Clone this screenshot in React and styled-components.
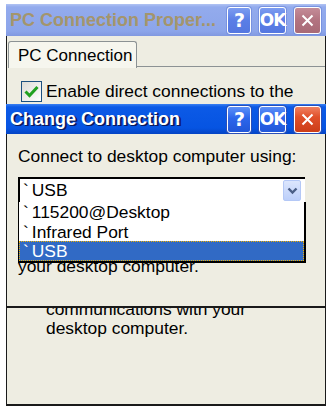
import styled, { createGlobalStyle } from 'styled-components';

const GlobalStyle = createGlobalStyle`
  html, body {
    margin: 0;
    background: #ffffff;
  }
  body {
    font-family: "Liberation Sans", Arial, sans-serif;
    font-size: 17.4px;
    color: #000000;
  }
`;

const Screen = styled.div`
  width: 331px;
  height: 414px;
  padding: 4px 5px 0 6px;
  box-sizing: border-box;
`;

const Window = styled.div`
  position: relative;
  width: 320px;
  height: 402px;
  box-sizing: border-box;
  background: #eeede2;
  border-left: 1px solid #1a1a1a;
  border-right: 1px solid #1a1a1a;
  border-bottom: 2px solid #1a1a1a;
  display: flex;
  flex-direction: column;
`;

const TitleBar = styled.div`
  height: ${(p) => p.$height}px;
  margin: 0 -1px;
  flex: none;
  display: flex;
  align-items: center;
  padding: 0 5px 0 4px;
  box-sizing: border-box;
  background: ${(p) =>
    p.$active
      ? 'linear-gradient(#3a80f2 0, #0c5ae6 3px, #0654e2 80%, #0444c4 100%)'
      : 'linear-gradient(#b1c3f3 0, #93abed 3px, #8ca5ea 85%, #8199e0 100%)'};
`;

const Title = styled.div`
  flex: 1;
  font-size: 18px;
  font-weight: bold;
  white-space: nowrap;
  overflow: hidden;
  color: ${(p) => (p.$active ? '#ffffff' : '#a4956c')};
  text-shadow: ${(p) => (p.$active ? '1px 1px 0 #0a1a60, 2px 1px 0 #0a1a60' : 'none')};
`;

const Buttons = styled.div`
  display: flex;
  gap: 8px;
`;

const CapButton = styled.div`
  width: ${(p) => p.$width}px;
  height: 27px;
  box-sizing: border-box;
  border: 1px solid #ffffff;
  border-radius: 3px;
  display: flex;
  align-items: center;
  justify-content: center;
  font-family: "DejaVu Sans", sans-serif;
  font-weight: bold;
  font-size: ${(p) => (p.$small ? 17 : 19)}px;
  letter-spacing: -1px;
  color: #ffffff;
  background: ${(p) =>
    p.$red
      ? p.$active
        ? 'linear-gradient(#f08060, #e0502a 40%, #cc3d18)'
        : 'linear-gradient(#c48c98, #b27380 50%, #a86a76)'
      : p.$active
      ? 'linear-gradient(#5c90f8, #2c66ec 45%, #2157d8)'
      : 'linear-gradient(#7c9cf0, #5a7ee6 50%, #5477e0)'};
  box-shadow: ${(p) => (p.$active ? '0 0 0 1px #2a4fb8' : '0 0 0 1px #7892e0')};
`;

function Caption({ active, text, height }) {
  return (
    <TitleBar $active={active} $height={height}>
      <Title $active={active}>{text}</Title>
      <Buttons>
        <CapButton $active={active} $width={24}>?</CapButton>
        <CapButton $active={active} $width={27} $small>
          OK
        </CapButton>
        <CapButton $active={active} $width={27} $red>
          <svg width="15" height="15" viewBox="0 0 15 15">
            <path d="M2.5 2.5 L12.5 12.5 M12.5 2.5 L2.5 12.5" stroke="#ffffff" strokeWidth="2" />
          </svg>
        </CapButton>
      </Buttons>
    </TitleBar>
  );
}

const TabStrip = styled.div`
  display: flex;
  align-items: flex-end;
  padding: 5px 0 0 1px;
  height: 32px;
  box-sizing: border-box;
  flex: none;
`;

const Tab = styled.div`
  width: 129px;
  height: 27px;
  box-sizing: border-box;
  border: 1px solid #8c9294;
  border-bottom: none;
  border-radius: 3px 3px 0 0;
  background: #f6f6ee;
  font-size: 17px;
  padding: 4px 0 0 9px;
  white-space: nowrap;
`;

const TabRest = styled.div`
  flex: 1;
  border-bottom: 1px solid #8c9294;
  margin-bottom: 1px;
`;

const Content = styled.div`
  padding: 13px 0 0 14px;
`;

const CheckRow = styled.div`
  display: flex;
  align-items: center;
  gap: 4px;
  height: 21px;
  white-space: nowrap;
`;

const CheckBox = styled.div`
  width: 21px;
  height: 21px;
  box-sizing: border-box;
  border: 1px solid #1c5180;
  background: linear-gradient(135deg, #dcdcd6, #ffffff);
  display: flex;
  align-items: center;
  justify-content: center;
`;

const Hint = styled.div`
  margin: 198px 0 0 25px;
  line-height: 19px;
`;

const Line = styled.div`
  height: 19px;
  white-space: nowrap;
`;

const Dialog = styled.div`
  position: absolute;
  top: 100px;
  left: -1px;
  width: 320px;
  height: 204px;
  box-sizing: border-box;
  background: #eeede2;
  border-left: 1px solid #1a1a1a;
  border-right: 1px solid #1a1a1a;
  border-bottom: 2px solid #1a1a1a;
  display: flex;
  flex-direction: column;
`;

const DialogBody = styled.div`
  padding: 13px 0 0 11px;
  line-height: 19px;
`;

const Combo = styled.div`
  position: relative;
  margin-top: 11px;
  width: 287px;
  height: 25px;
  box-sizing: border-box;
  background: #ffffff;
  border-top: 2px solid #000000;
  border-left: 2px solid #000000;
  display: flex;
  align-items: center;
  padding-left: 3px;
`;

const ComboText = styled.div`
  flex: 1;
  white-space: nowrap;
`;

const Tick = styled.span`
  margin-right: 3px;
`;

const DropButton = styled.div`
  width: 18px;
  height: 21px;
  margin-right: 4px;
  box-sizing: border-box;
  border: 1px solid #b4c8f6;
  border-radius: 2px;
  background: linear-gradient(#dce6fd, #bccffa);
  display: flex;
  align-items: center;
  justify-content: center;
`;

const List = styled.div`
  position: absolute;
  top: 23px;
  left: -2px;
  width: 288px;
  box-sizing: border-box;
  background: #ffffff;
  border-left: 1px solid #000000;
  border-right: 2px solid #000000;
  border-bottom: 2px solid #000000;
  z-index: 2;
`;

const Item = styled.div`
  height: 19.5px;
  line-height: 19px;
  padding-left: 3px;
  white-space: nowrap;
  box-sizing: border-box;
  color: ${(p) => (p.$selected ? '#ffffff' : '#000000')};
  background: ${(p) => (p.$selected ? '#316ac5' : 'transparent')};
  border: 1px ${(p) => (p.$selected ? 'dotted #f0b000' : 'solid transparent')};
`;

const Note = styled.div`
  margin-top: 55px;
`;

function Entry({ label }) {
  return (
    <>
      <Tick>`</Tick>
      {label}
    </>
  );
}

export default function App() {
  return (
    <>
      <GlobalStyle />
      <Screen>
        <Window>
          <Caption text="PC Connection Proper..." height={32} />
          <TabStrip>
            <Tab>PC Connection</Tab>
            <TabRest />
          </TabStrip>
          <Content>
            <CheckRow>
              <CheckBox>
                <svg width="15" height="13" viewBox="0 0 15 13">
                  <path d="M1.5 6.5 L5.5 10.5 L13.5 2" fill="none" stroke="#21a121" strokeWidth="3" />
                </svg>
              </CheckBox>
              Enable direct connections to the
            </CheckRow>
            <Hint>
              <Line>communications with your</Line>
              <Line>desktop computer.</Line>
            </Hint>
          </Content>
          <Dialog>
            <Caption active text="Change Connection" height={30} />
            <DialogBody>
              <div>Connect to desktop computer using:</div>
              <Combo>
                <ComboText>
                  <Entry label="USB" />
                </ComboText>
                <DropButton>
                  <svg width="11" height="8" viewBox="0 0 11 8">
                    <path d="M1.5 1.5 L5.5 5.5 L9.5 1.5" fill="none" stroke="#4a5e86" strokeWidth="2.4" />
                  </svg>
                </DropButton>
                <List>
                  <Item>
                    <Entry label="115200@Desktop" />
                  </Item>
                  <Item>
                    <Entry label="Infrared Port" />
                  </Item>
                  <Item $selected>
                    <Entry label="USB" />
                  </Item>
                </List>
              </Combo>
              <Note>
                <Line>your desktop computer.</Line>
              </Note>
            </DialogBody>
          </Dialog>
        </Window>
      </Screen>
    </>
  );
}
